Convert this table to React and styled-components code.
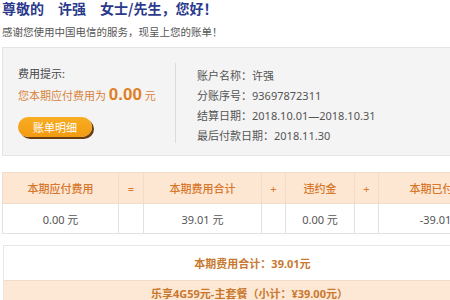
import styled, { createGlobalStyle } from 'styled-components'

const GlobalStyle = createGlobalStyle`
  html, body {
    margin: 0;
    padding: 0;
    background: #fff;
    overflow: hidden;
  }
  body {
    font-family: "Noto Sans", "Noto Sans CJK SC", sans-serif;
    color: #555;
  }
`

const account = [
  { label: '账户名称：', value: '许强' },
  { label: '分账序号：', value: '93697872311' },
  { label: '结算日期：', value: '2018.10.01—2018.10.31' },
  { label: '最后付款日期：', value: '2018.11.30' },
]

const columns = [
  { head: '本期应付费用', value: '0.00 元', width: 116 },
  { head: '=', value: '', width: 25, op: true },
  { head: '本期费用合计', value: '39.01 元', width: 118 },
  { head: '+', value: '', width: 24, op: true },
  { head: '违约金', value: '0.00 元', width: 69 },
  { head: '+', value: '', width: 24, op: true },
  { head: '本期已付费用', value: '-39.01 元', width: 128 },
  { head: '', value: '', width: 60 },
]

const tableWidth = columns.reduce((sum, c) => sum + c.width, 0)

export default function App() {
  return (
    <>
      <GlobalStyle />
      <Page>
        <Greeting>尊敬的　许强　女士/先生，您好！</Greeting>
        <Intro>感谢您使用中国电信的服务，现呈上您的账单！</Intro>

        <SummaryBox>
          <TipColumn>
            <TipTitle>费用提示:</TipTitle>
            <DueLine>
              您本期应付费用为 <DueAmount>0.00</DueAmount> 元
            </DueLine>
            <DetailButton>账单明细</DetailButton>
          </TipColumn>
          <Divider />
          <AccountColumn>
            {account.map(row => (
              <AccountRow key={row.label}>
                {row.label}
                {row.value}
              </AccountRow>
            ))}
          </AccountColumn>
        </SummaryBox>

        <FeeTable style={{ width: tableWidth }}>
          <colgroup>
            {columns.map((c, i) => (
              <col key={i} style={{ width: c.width }} />
            ))}
          </colgroup>
          <thead>
            <tr>
              {columns.map((c, i) => (
                <HeadCell key={i} $op={c.op}>
                  {c.head}
                </HeadCell>
              ))}
            </tr>
          </thead>
          <tbody>
            <tr>
              {columns.map((c, i) => (
                <BodyCell key={i}>{c.value}</BodyCell>
              ))}
            </tr>
          </tbody>
        </FeeTable>

        <TotalBox>
          <TotalRow>本期费用合计：39.01元</TotalRow>
          <PlanRow>乐享4G59元-主套餐（小计：¥39.00元）</PlanRow>
        </TotalBox>
      </Page>
    </>
  )
}

const Page = styled.div`
  width: 560px;
  padding-left: 2px;
`

const Greeting = styled.h1`
  margin: 0;
  font-family: "Noto Sans CJK SC", sans-serif;
  font-size: 14px;
  line-height: 16px;
  font-weight: 700;
  color: #2b3a8c;
`

const Intro = styled.p`
  margin: 8px 0 0;
  font-family: "Noto Sans CJK SC", sans-serif;
  font-size: 10.5px;
  line-height: 16px;
  color: #555;
`

const SummaryBox = styled.div`
  margin-top: 7px;
  display: flex;
  background: #f4f4f4;
  border: 1px solid #e4e4e4;
  height: 107px;
`

const TipColumn = styled.div`
  width: 172px;
  padding: 18px 0 0 15px;
  box-sizing: border-box;
  font-size: 11px;
`

const TipTitle = styled.div`
  line-height: 16px;
  color: #444;
`

const DueLine = styled.div`
  margin-top: 2px;
  line-height: 22px;
  color: #d9823a;
`

const DueAmount = styled.span`
  font-family: "Liberation Sans", sans-serif;
  font-size: 17px;
  font-weight: 700;
  color: #e07f1f;
`

const DetailButton = styled.button`
  margin-top: 10px;
  width: 74px;
  height: 20px;
  border: none;
  border-radius: 10px;
  background: linear-gradient(#f8ad22, #f29b12);
  box-shadow: 2px 2px 0 #6a3c12;
  color: #fff;
  font-family: "Noto Sans CJK SC", sans-serif;
  font-size: 11px;
  padding: 0;
`

const Divider = styled.div`
  width: 1px;
  background: #dcdcdc;
  margin: 15px 0 12px;
`

const AccountColumn = styled.div`
  padding: 18px 0 0 21px;
  font-size: 11px;
`

const AccountRow = styled.div`
  line-height: 20px;
  color: #555;
`

const FeeTable = styled.table`
  margin-top: 16px;
  border-collapse: collapse;
  table-layout: fixed;
  font-size: 11px;
`

const HeadCell = styled.th`
  height: 30px;
  padding: 0;
  background: #fde7d3;
  border: 1px solid #f1dccb;
  color: #d7772c;
  font-weight: ${p => (p.$op ? 400 : 500)};
  text-align: center;
  white-space: nowrap;
  overflow: hidden;
`

const BodyCell = styled.td`
  height: 29px;
  padding: 0;
  border: 1px solid #e2e2e2;
  color: #555;
  text-align: center;
  white-space: nowrap;
`

const TotalBox = styled.div`
  margin-top: 11px;
  margin-left: 1px;
  border: 1px solid #e6e6e6;
  font-size: 11px;
  font-weight: 700;
  color: #c9782f;
`

const TotalRow = styled.div`
  height: 34px;
  line-height: 36px;
  text-align: center;
  padding-right: 60px;
  border-bottom: 1px solid #f0dccb;
`

const PlanRow = styled.div`
  height: 30px;
  line-height: 26px;
  background: #fde8d5;
  text-align: center;
  padding-right: 66px;
`
